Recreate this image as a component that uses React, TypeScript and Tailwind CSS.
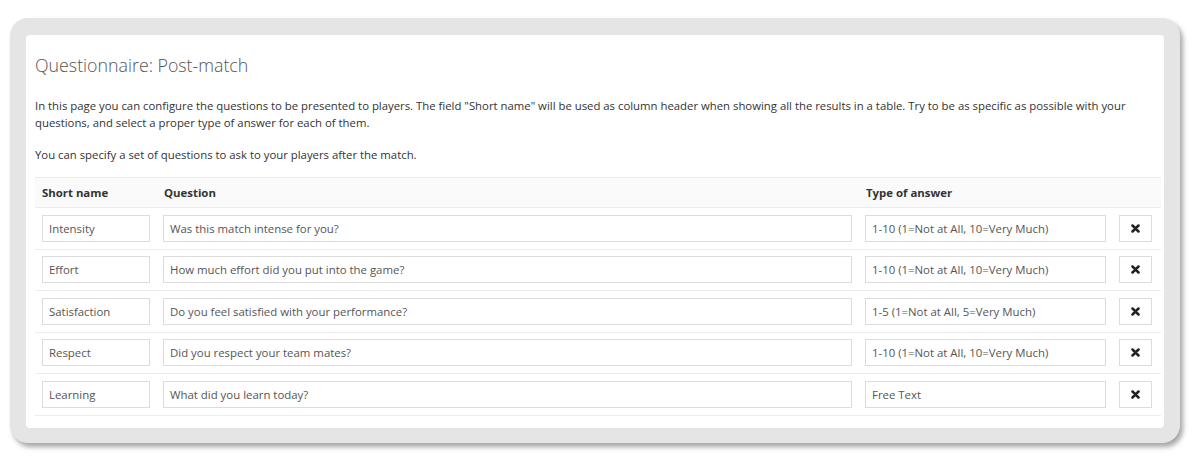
import React from "react"

const rows = [
  { short: "Intensity", question: "Was this match intense for you?", type: "1-10 (1=Not at All, 10=Very Much)" },
  { short: "Effort", question: "How much effort did you put into the game?", type: "1-10 (1=Not at All, 10=Very Much)" },
  { short: "Satisfaction", question: "Do you feel satisfied with your performance?", type: "1-5 (1=Not at All, 5=Very Much)" },
  { short: "Respect", question: "Did you respect your team mates?", type: "1-10 (1=Not at All, 10=Very Much)" },
  { short: "Learning", question: "What did you learn today?", type: "Free Text" },
]

function TimesIcon() {
  return (
    <svg width="9" height="9" viewBox="0 0 12 12">
      <path d="M2 2 L10 10 M10 2 L2 10" stroke="#222" strokeWidth="3.4" strokeLinecap="round" />
    </svg>
  )
}

const field =
  "h-[27px] border border-[#dcdcdc] bg-white px-[6px] flex items-center text-[11.4px] text-[#555] whitespace-nowrap"

export default function App() {
  return (
    <div className="min-h-screen bg-white pl-[10px] pt-[18px] font-['Open_Sans',sans-serif]">
      {/* frame */}
      <div className="w-[1170px] rounded-[18px] bg-[#e5e5e5] pl-[16px] pr-[16px] pt-[17px] pb-[15px] shadow-[3px_4px_5px_rgba(0,0,0,0.35)]">
        <div className="rounded-[4px] bg-white pl-[9px] pr-[3px] pt-[16px] pb-[12px]">
          <h1 className="text-[17.8px] font-light leading-[28px] text-[#555]">Questionnaire: Post-match</h1>

          <p className="mt-[18px] text-[11.35px] leading-[17px] text-[#333]">
            In this page you can configure the questions to be presented to players. The field "Short name" will be used as
            column header when showing all the results in a table. Try to be as specific as possible with your questions,
            and select a proper type of answer for each of them.
          </p>
          <p className="mt-[15px] text-[11.35px] leading-[17px] text-[#333]">
            You can specify a set of questions to ask to your players after the match.
          </p>

          {/* table */}
          <div className="mt-[14px] border-b border-[#ececec]">
            <div className="flex h-[30px] items-center gap-[13px] border-t border-[#ececec] bg-[#fafafa] pl-[7px] text-[11.4px] font-bold text-[#333]">
              <div className="w-[108px]">Short name</div>
              <div className="w-[689px] pl-px">Question</div>
              <div className="w-[241px] pl-px">Type of answer</div>
              <div className="w-[33px]"></div>
            </div>
            {rows.map((r) => (
              <div key={r.short} className="flex items-center gap-[13px] border-t border-[#ececec] py-[6.75px] pl-[7px]">
                <div className={field + " w-[108px]"}>{r.short}</div>
                <div className={field + " w-[689px]"}>{r.question}</div>
                <div className={field + " w-[241px]"}>{r.type}</div>
                <div className="flex h-[27px] w-[33px] items-center justify-center border border-[#dcdcdc] bg-white">
                  <TimesIcon />
                </div>
              </div>
            ))}
          </div>
        </div>
      </div>
    </div>
  )
}
